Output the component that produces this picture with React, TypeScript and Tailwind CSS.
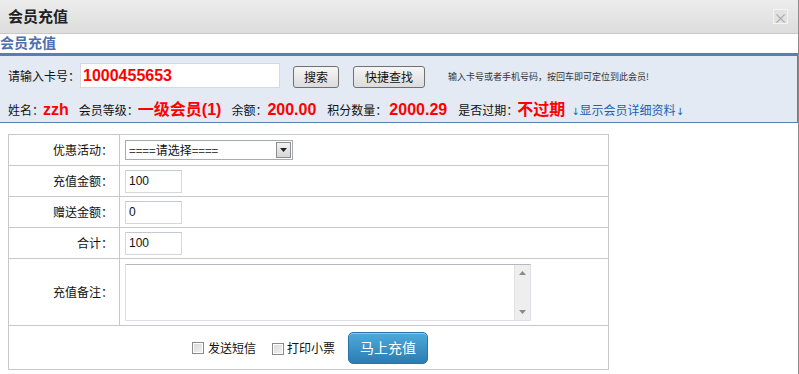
import React from 'react';

const cn = '"Noto Sans CJK SC", "Liberation Sans", sans-serif';
const num = '"Liberation Sans", "Noto Sans CJK SC", sans-serif';

const GrayButton: React.FC<{ label: string; width: string }> = ({ label, width }) => (
    <button
        className={`${width} h-[22px] border border-[#707070] rounded-[3px] bg-gradient-to-b from-[#f6f6f6] to-[#dcdcdc] text-[12px] text-[#111] leading-none`}
        style={{ fontFamily: cn }}
    >
        {label}
    </button>
);

const FormRow: React.FC<{ label: string; height: string; last?: boolean; children: React.ReactNode }> = ({ label, height, last, children }) => (
    <div className={`flex ${height} ${last ? '' : 'border-b border-[#c8c8c8]'}`}>
        <div className="w-[111px] shrink-0 border-r border-[#c8c8c8] flex items-center justify-end pr-[6px] text-[12px] text-[#111]">
            {label}
        </div>
        <div className="flex-1 flex items-center pl-[5px]">{children}</div>
    </div>
);

const SmallInput: React.FC<{ value: string }> = ({ value }) => (
    <div
        className="w-[57px] h-[23px] border border-[#d4d8de] border-t-[#c4c8cf] bg-white flex items-center pl-[3px] text-[12px] text-[#111]"
        style={{ fontFamily: num }}
    >
        {value}
    </div>
);

const CheckBox: React.FC = () => (
    <span className="w-[12px] h-[12px] border border-[#8a8a8a] bg-gradient-to-br from-[#d8d8d8] to-[#f4f4f4] shadow-[inset_0_0_0_1px_#fff] inline-block" />
);

export default function App() {
    return (
        <div className="w-[799px] h-[374px] bg-white border-r border-[#8c8c8c] overflow-hidden" style={{ fontFamily: cn }}>
            {/* dialog title bar */}
            <div className="h-[34px] border-b border-[#c9c9c9] bg-gradient-to-b from-[#ececec] to-[#dddddd] flex items-center justify-between pl-[8px] pr-[10px]">
                <span className="text-[15px] font-bold text-[#222]">会员充值</span>
                <span className="w-[15px] h-[15px] border border-[#f4f4f4] bg-[#e2e2e2] flex items-center justify-center text-[#a8a8a8] text-[14px] leading-none">
                    ×
                </span>
            </div>

            {/* section heading */}
            <div className="h-[22px] border-b-[3px] border-[#5b7cb4]">
                <span className="block text-[14px] font-bold text-[#4d6fae] leading-[17px]">会员充值</span>
            </div>

            {/* search panel */}
            <div className="h-[67px] bg-[#e3eaf4] border-b border-r border-[#5b7cb4] pl-[8px] pt-[7px]">
                <div className="flex items-center h-[25px]">
                    <span className="text-[12px] text-[#111] w-[72px]">请输入卡号：</span>
                    <div
                        className="w-[200px] h-[25px] bg-white border border-[#d4dae2] flex items-center pl-[2px] text-[16px] font-bold text-[#f00]"
                        style={{ fontFamily: num }}
                    >
                        1000455653
                    </div>
                    <div className="ml-[13px] mt-[3px] flex gap-[14px]">
                        <GrayButton label="搜索" width="w-[46px]" />
                        <GrayButton label="快捷查找" width="w-[72px]" />
                    </div>
                    <span className="ml-[23px] mt-[2px] text-[9px] text-[#333]">输入卡号或者手机号码，按回车即可定位到此会员!</span>
                </div>
                <div className="flex items-baseline mt-[10px] text-[12px] text-[#111] leading-[20px]">
                    <span>姓名：</span>
                    <span className="text-[16px] font-bold text-[#f00] -ml-[1px]" style={{ fontFamily: num }}>zzh</span>
                    <span className="ml-[10px]">会员等级：</span>
                    <span className="text-[16px] font-bold text-[#f00] -ml-[1px]" style={{ fontFamily: num }}>一级会员(1)</span>
                    <span className="ml-[10px]">余额：</span>
                    <span className="text-[16px] font-bold text-[#f00]" style={{ fontFamily: num }}>200.00</span>
                    <span className="ml-[11px]">积分数量：</span>
                    <span className="text-[16px] font-bold text-[#f00] ml-[2px]" style={{ fontFamily: num }}>2000.29</span>
                    <span className="ml-[11px]">是否过期：</span>
                    <span className="text-[16px] font-bold text-[#f00] -ml-[1px]">不过期</span>
                    <span className="ml-[6px] text-[#1f5fb3]">
                        <span className="text-[10px]" style={{ fontFamily: '"DejaVu Sans", sans-serif' }}>↓</span>
                        显示会员详细资料
                        <span className="text-[10px]" style={{ fontFamily: '"DejaVu Sans", sans-serif' }}>↓</span>
                    </span>
                </div>
            </div>

            {/* recharge form */}
            <div className="ml-[8px] mt-[11px] w-[601px] border border-[#c8c8c8]">
                <FormRow label="优惠活动：" height="h-[31px]">
                    <div className="w-[168px] h-[20px] border border-[#a6abb2] bg-white flex items-center justify-between pl-[3px] pr-[1px]">
                        <span className="text-[12px] text-[#111] leading-none">====请选择====</span>
                        <span className="w-[15px] h-[16px] border border-[#8e8e8e] bg-gradient-to-b from-[#f3f3f3] to-[#d6d6d6] flex items-center justify-center">
                            <svg width="7" height="4" viewBox="0 0 7 4">
                                <path d="M0 0h7L3.5 4z" fill="#222" />
                            </svg>
                        </span>
                    </div>
                </FormRow>
                <FormRow label="充值金额：" height="h-[31px]">
                    <SmallInput value="100" />
                </FormRow>
                <FormRow label="赠送金额：" height="h-[31px]">
                    <SmallInput value="0" />
                </FormRow>
                <FormRow label="合计：" height="h-[31px]">
                    <SmallInput value="100" />
                </FormRow>
                <FormRow label="充值备注：" height="h-[67px]">
                    <div className="w-[406px] h-[57px] border border-[#dde1e6] border-t-[#b4b8be] bg-white flex justify-end">
                        <div className="w-[16px] h-full bg-[#eeeeee] border-l border-[#e2e2e2] flex flex-col items-center justify-between py-[6px]">
                            <svg width="7" height="4" viewBox="0 0 7 4">
                                <path d="M0 4h7L3.5 0z" fill="#8a8a8a" />
                            </svg>
                            <svg width="7" height="4" viewBox="0 0 7 4">
                                <path d="M0 0h7L3.5 4z" fill="#8a8a8a" />
                            </svg>
                        </div>
                    </div>
                </FormRow>
                <div className="h-[43px] flex items-center justify-center pl-[3px]">
                    <CheckBox />
                    <span className="ml-[4px] text-[12px] text-[#111]">发送短信</span>
                    <span className="ml-[16px]"><CheckBox /></span>
                    <span className="ml-[3px] text-[12px] text-[#111]">打印小票</span>
                    <button className="ml-[13px] w-[80px] h-[32px] rounded-[5px] border border-[#2c73a6] bg-gradient-to-b from-[#4eaadb] to-[#2a7db2] text-white text-[14px] shadow-[inset_0_1px_0_rgba(255,255,255,0.35)]">
                        马上充值
                    </button>
                </div>
            </div>
        </div>
    );
}
